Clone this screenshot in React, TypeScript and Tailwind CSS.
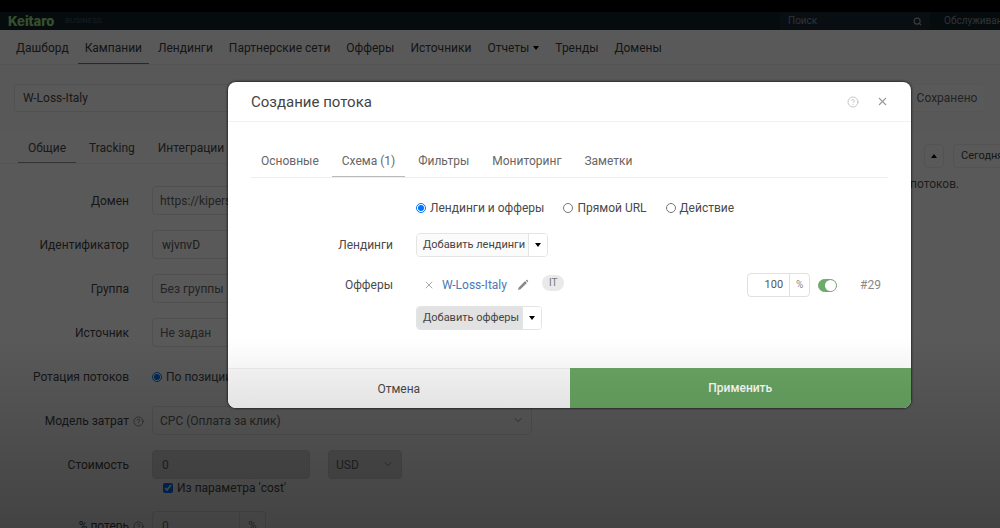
import React, { useState } from "react";
import { ChevronDown, CircleQuestionMark, Search, X } from "lucide-react";

const navItems = ["Дашборд", "Кампании", "Лендинги", "Партнерские сети", "Офферы", "Источники", "Отчеты", "Тренды", "Домены"];
const campaignTabs = ["Общие", "Tracking", "Интеграции"];
const streamTabs = ["Основные", "Схема (1)", "Фильтры", "Мониторинг", "Заметки"];
const schemas = ["Лендинги и офферы", "Прямой URL", "Действие"];

function Caret({ up = false }: { up?: boolean }) {
  return (
    <svg viewBox="0 0 6 4" className="h-1 w-1.5 shrink-0 fill-black" aria-hidden="true">
      <path d={up ? "M0 4h6L3 0z" : "M0 0h6L3 4z"} />
    </svg>
  );
}

function Pencil() {
  return (
    <svg viewBox="0 0 12 12" className="size-3 fill-current" aria-hidden="true">
      <path d="M1 11l.7-2.500L8.100 2.100l1.800 1.800L3.500 10.300zM8.800 1.500l.5-.5c.3-.3.7-.3 1 0l.7.7c.3.3.3.7 0 1l-.5.5z" />
    </svg>
  );
}

function Field({ label, id, help = false, children }: { label: string; id: string; help?: boolean; children: React.ReactNode }) {
  return (
    <div className="grid grid-cols-[129px_1fr] items-center gap-x-[23px]">
      <label htmlFor={id} className="relative whitespace-nowrap text-right text-[#444]">
        {label}
        {help && <CircleQuestionMark size={11} strokeWidth={1.5} className="absolute -right-[15px] top-[5px] text-[#666]" />}
      </label>
      <div className="flex h-[29px] items-center">{children}</div>
    </div>
  );
}

function SelectBox({ id, value, disabled = false, className = "" }: { id: string; value: string; disabled?: boolean; className?: string }) {
  return (
    <div className={`relative h-full ${className}`}>
      <select
        id={id}
        aria-label={id}
        disabled={disabled}
        className="h-full w-full appearance-none rounded border border-[#e4e4e4] bg-white px-[7px] text-[#666] disabled:border-[#d8d8d8] disabled:bg-[#dedede] disabled:opacity-100"
      >
        <option>{value}</option>
      </select>
      <ChevronDown size={12} className="pointer-events-none absolute right-2 top-2 text-[#888]" />
    </div>
  );
}

function SplitButton({ label, pressed = false }: { label: string; pressed?: boolean }) {
  return (
    <div className="flex h-6 w-fit overflow-hidden rounded border border-[#e4e4e4] text-[11px] text-[#444]">
      <button type="button" className={`border-r border-[#e4e4e4] pl-[6px] pr-[3px] ${pressed ? "bg-[#e2e2e2]" : "bg-[#fbfbfb]"}`}>
        {label}
      </button>
      <button type="button" aria-label={`${label}: меню`} className="flex w-[18px] items-center justify-center bg-white">
        <Caret />
      </button>
    </div>
  );
}

function CampaignPage() {
  return (
    <div className="bg-white">
      <div className="h-3 bg-black" />
      <header className="flex h-[18px] items-center bg-[#13222a] pl-2">
        <span className="w-[57px] font-[Inter,sans-serif] text-[13px] font-extrabold leading-[14px] text-[#9be086]">Keitaro</span>
        <span className="text-[8px] text-[#43525c]">BUSINESS</span>
        <div className="ml-auto flex h-full w-[150px] items-center bg-[#172a35] px-2">
          <input aria-label="Поиск" placeholder="Поиск" className="w-0 flex-1 bg-transparent text-[10px] placeholder:text-[#87919a]" />
          <Search size={9} strokeWidth={3} className="text-[#a0a8ae]" />
        </div>
        <a href="#maintenance" className="ml-[14px] w-14 overflow-hidden whitespace-nowrap text-[10px] text-[#87919a]">Обслуживание</a>
      </header>

      <nav className="flex h-[35px] gap-[2px] border-b border-[#f4f4f4] pl-[9px] text-[#3c3c3c]">
        {navItems.map((item) => (
          <a
            key={item}
            href="#nav"
            className={`flex items-center gap-1 whitespace-nowrap border-b px-[7px] pt-[2px] ${item === "Кампании" ? "border-[#777]" : "border-transparent"}`}
          >
            {item}
            {item === "Отчеты" && <Caret />}
          </a>
        ))}
      </nav>

      <div className="flex h-[66px] items-center gap-[15px] bg-[#fbfbfb] pl-[14px] pr-[14px]">
        <input aria-label="Название кампании" defaultValue="W-Loss-Italy" className="h-7 w-0 flex-1 rounded border border-[#e8e8e8] bg-white px-2 text-[#4a4a4a]" />
        <button type="button" className="h-7 w-[78px] rounded border border-[#f6f6f6] bg-white text-[#666]">Сохранено</button>
      </div>

      <div className="flex">
        <main className="min-w-0 flex-1">
          <div className="mb-[22px] flex h-[33px] gap-[3px] border-b border-[#f4f4f4] pl-[18px] text-[#4a4a4a]">
            {campaignTabs.map((tab) => (
              <button key={tab} type="button" className={`border-b px-[10px] pt-[2px] ${tab === "Общие" ? "border-[#999]" : "border-transparent"}`}>
                {tab}
              </button>
            ))}
          </div>
          <div className="flex w-[532px] flex-col gap-[15px]">
            <Field label="Домен" id="domain">
              <SelectBox id="domain" value="https://kipers.com" className="w-full" />
            </Field>
            <Field label="Идентификатор" id="alias">
              <input id="alias" defaultValue="wjvnvD" className="h-full w-full rounded border border-[#e4e4e4] bg-white px-[9px] text-[#555]" />
            </Field>
            <Field label="Группа" id="group">
              <SelectBox id="group" value="Без группы" className="w-full" />
            </Field>
            <Field label="Источник" id="source">
              <SelectBox id="source" value="Не задан" className="w-full" />
            </Field>
            <Field label="Ротация потоков" id="rotation">
              <input id="rotation" type="radio" defaultChecked className="mr-1 size-[10px]" />
              <label htmlFor="rotation" className="text-[#4a4a4a]">По позиции</label>
            </Field>
            <Field label="Модель затрат" id="model" help>
              <SelectBox id="model" value="CPC (Оплата за клик)" className="w-full" />
            </Field>
            <div>
              <Field label="Стоимость" id="cost">
                <input id="cost" disabled defaultValue="0" className="mr-[18px] h-full w-[158px] rounded border border-[#d8d8d8] bg-[#dedede] px-[9px] text-[#666]" />
                <SelectBox id="currency" value="USD" disabled className="w-[74px]" />
              </Field>
              <label className="ml-[163px] flex h-[17px] items-center gap-1 text-[#4a4a4a]">
                <input type="checkbox" defaultChecked className="size-[10px]" />
                Из параметра 'cost'
              </label>
            </div>
            <Field label="% потерь" id="loss" help>
              <input id="loss" defaultValue="0" className="h-full w-[88px] rounded-l border border-[#e4e4e4] bg-white px-[9px] text-[#777]" />
              <span className="flex h-full w-[26px] items-center justify-center rounded-r border border-l-0 border-[#e4e4e4] text-[11px] text-[#777]">%</span>
            </Field>
          </div>
        </main>
        <aside className="w-[92px] overflow-hidden pt-[13px]">
          <div className="flex gap-[9px] pl-4">
            <button type="button" aria-label="Свернуть" className="flex h-6 w-5 shrink-0 items-center justify-center rounded border border-[#eee]">
              <Caret up />
            </button>
            <button type="button" className="h-6 w-20 shrink-0 rounded border border-[#eee] px-[7px] text-left text-[11px] text-[#444]">Сегодня</button>
          </div>
          <p className="mt-[6px] pl-[2px] text-[#555]">потоков.</p>
        </aside>
      </div>
    </div>
  );
}

function StreamDialog() {
  const [schema, setSchema] = useState(schemas[0]);
  const [active, setActive] = useState(true);
  return (
    <div role="dialog" aria-label="Создание потока" className="min-w-0 flex-1 overflow-hidden rounded-lg bg-white text-[#4a4a4a] shadow-[0_0_2px_1px_rgba(0,0,0,0.5)]">
      <div className="flex h-10 items-center border-b border-[#f0f0f0] pl-[23px] pr-[22px]">
        <h2 className="text-[15px] text-[#444]">Создание потока</h2>
        <button type="button" aria-label="Справка" className="ml-auto text-[#b5b5b5]">
          <CircleQuestionMark size={12} strokeWidth={1.5} />
        </button>
        <button type="button" aria-label="Закрыть" className="ml-[17px] text-[#999]">
          <X size={13} strokeWidth={2} />
        </button>
      </div>

      <div className="mx-[23px] mt-[22px] flex h-[34px] gap-[3px] border-b border-[#eee] text-[#666]">
        {streamTabs.map((tab) => (
          <button key={tab} type="button" className={`whitespace-nowrap border-b px-[10px] pt-[2px] ${tab === "Схема (1)" ? "border-[#bbb]" : "border-transparent"}`}>
            {tab}
          </button>
        ))}
      </div>

      <div className="pb-[38px] pl-[188px] pr-[30px] pt-[18px]">
        <div className="flex h-6 items-center gap-[19px]">
          {schemas.map((name) => (
            <label key={name} className="flex items-center gap-1 whitespace-nowrap">
              <input type="radio" name="schema" checked={schema === name} onChange={() => setSchema(name)} className="size-[10px]" />
              {name}
            </label>
          ))}
        </div>
        <div className="-ml-[88px] mt-[13px] grid grid-cols-[65px_1fr] items-center gap-x-[23px]">
          <span className="text-right">Лендинги</span>
          <SplitButton label="Добавить лендинги" />
          <span className="mt-4 text-right">Офферы</span>
          <div className="mt-4 flex h-6 items-center">
            <button type="button" aria-label="Удалить оффер" className="ml-[7px] text-[#aaa]">
              <X size={12} strokeWidth={2} />
            </button>
            <a href="#offer" className="ml-[7px] text-[#4a7ab8]">W-Loss-Italy</a>
            <button type="button" aria-label="Изменить" className="ml-[10px] text-[#888]">
              <Pencil />
            </button>
            <span className="mb-1 ml-[13px] rounded-full bg-[#e9e9e9] px-[7px] text-[10px] leading-4 text-[#777]">IT</span>
            <div className="ml-auto flex h-6 w-[63px] rounded border border-[#e0e0e0]">
              <input aria-label="Доля" defaultValue="100" className="w-0 flex-1 px-[6px] text-right text-[11px] text-[#555]" />
              <span className="flex w-5 items-center justify-center border-l border-[#e0e0e0] text-[10px] text-[#888]">%</span>
            </div>
            <button
              type="button"
              role="switch"
              aria-label="Оффер включен"
              aria-checked={active}
              onClick={() => setActive(!active)}
              className={`ml-2 flex h-[13px] w-[19px] rounded-full border border-[#6dab6b] bg-[#6dab6b] ${active ? "justify-end" : "justify-start"}`}
            >
              <span className="size-[11px] rounded-full bg-white" />
            </button>
            <span className="ml-[23px] text-xs text-[#888]">#29</span>
          </div>
          <div className="col-start-2 mt-[9px]">
            <SplitButton label="Добавить офферы" pressed />
          </div>
        </div>
      </div>

      <div className="grid h-10 grid-cols-2">
        <button type="button" className="border-t border-[#eee] bg-[#fafafa]">Отмена</button>
        <button type="button" className="bg-[#69a563] font-medium text-white">Применить</button>
      </div>
    </div>
  );
}

export default function App() {
  return (
    <div className="relative h-screen overflow-hidden bg-white font-[Roboto,sans-serif] text-[12px] leading-5">
      <CampaignPage />
      <div className="absolute inset-0 flex items-start bg-black/65 pl-[228px] pr-[89px] pt-[82px]">
        <StreamDialog />
      </div>
      <div className="pointer-events-none absolute inset-x-0 bottom-0 h-[190px] bg-linear-to-b from-transparent to-black/25" />
    </div>
  );
}
